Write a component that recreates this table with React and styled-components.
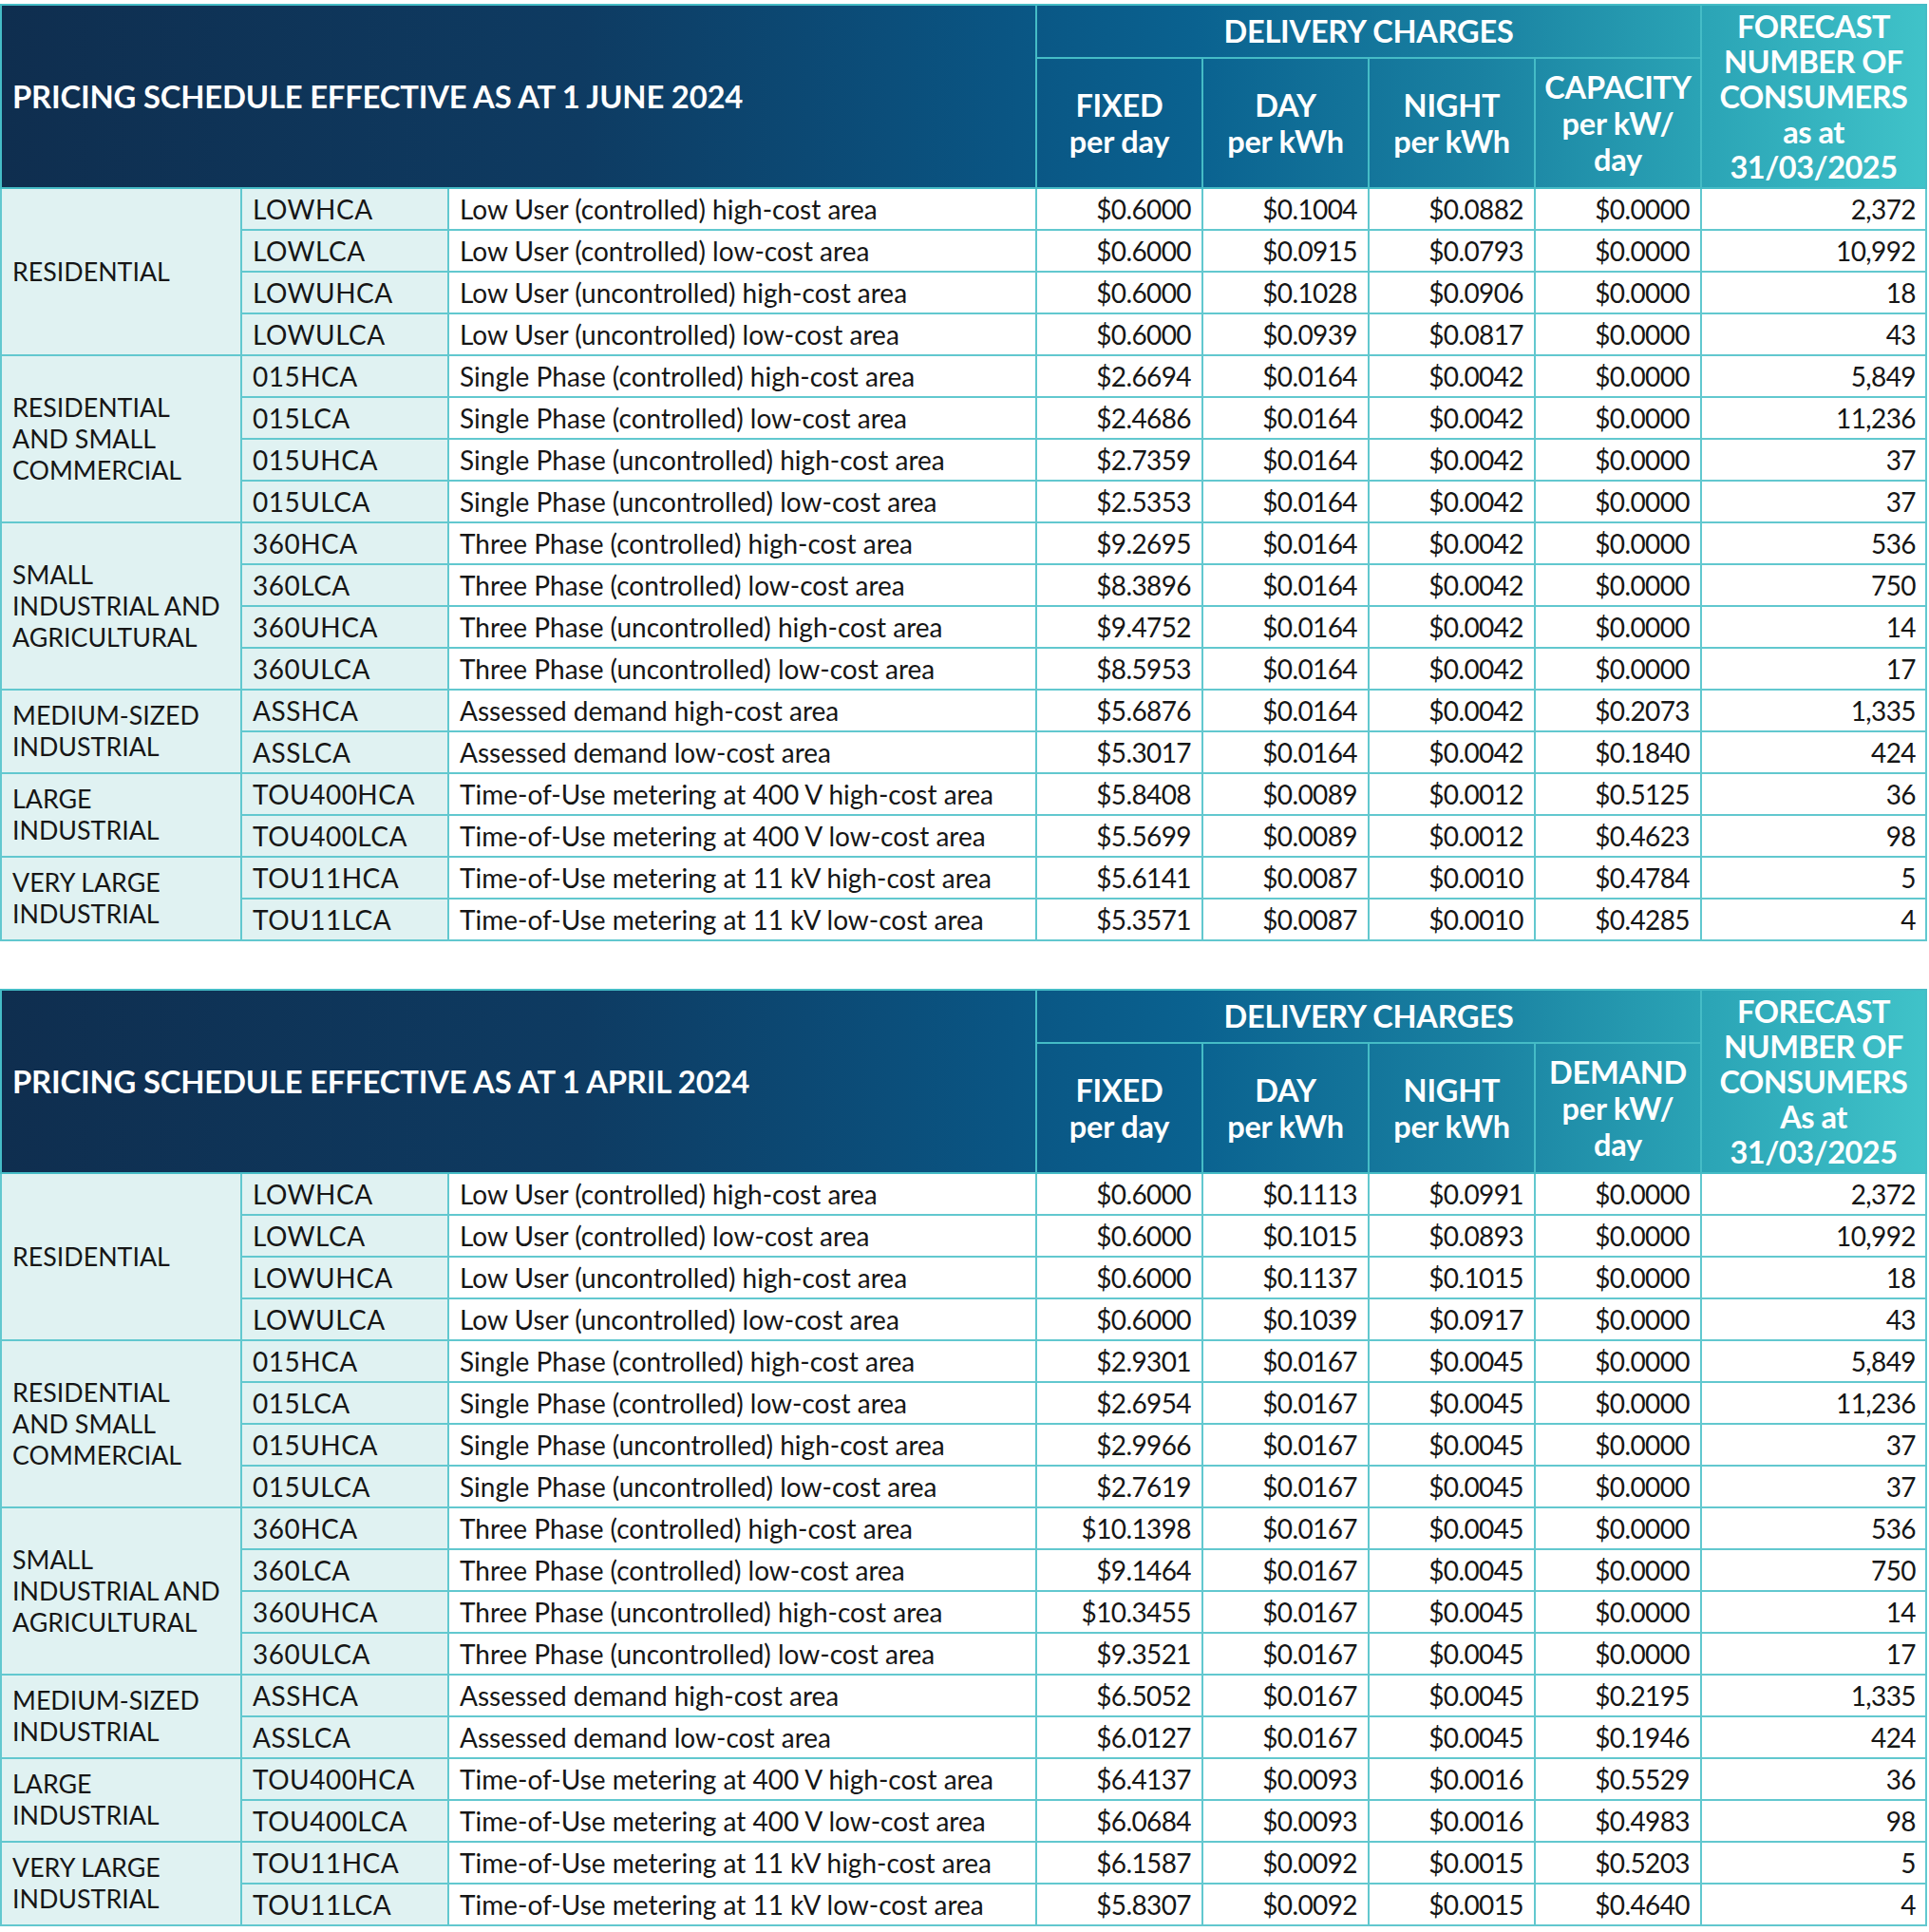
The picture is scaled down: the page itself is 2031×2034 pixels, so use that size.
import styled, { createGlobalStyle } from "styled-components";

const GlobalStyle = createGlobalStyle`
  * { box-sizing: border-box; }
  body {
    margin: 0;
    background: #fff;
    font-family: Lato, "Open Sans", sans-serif;
    color: #161616;
  }
`;

const COLS = "253px 218px 619px 175px 175px 175px 175px 237px";
const HEAD_LINE = "#45bcc6";
const BODY_LINE = "#62c8cf";
const TINT = "#e0f2f2";

const june = [
  {
    group: ["RESIDENTIAL"],
    rows: [
      ["LOWHCA", "Low User (controlled) high-cost area", "$0.6000", "$0.1004", "$0.0882", "$0.0000", "2,372"],
      ["LOWLCA", "Low User (controlled) low-cost area", "$0.6000", "$0.0915", "$0.0793", "$0.0000", "10,992"],
      ["LOWUHCA", "Low User (uncontrolled) high-cost area", "$0.6000", "$0.1028", "$0.0906", "$0.0000", "18"],
      ["LOWULCA", "Low User (uncontrolled) low-cost area", "$0.6000", "$0.0939", "$0.0817", "$0.0000", "43"],
    ],
  },
  {
    group: ["RESIDENTIAL", "AND SMALL", "COMMERCIAL"],
    rows: [
      ["015HCA", "Single Phase (controlled) high-cost area", "$2.6694", "$0.0164", "$0.0042", "$0.0000", "5,849"],
      ["015LCA", "Single Phase (controlled) low-cost area", "$2.4686", "$0.0164", "$0.0042", "$0.0000", "11,236"],
      ["015UHCA", "Single Phase (uncontrolled) high-cost area", "$2.7359", "$0.0164", "$0.0042", "$0.0000", "37"],
      ["015ULCA", "Single Phase (uncontrolled) low-cost area", "$2.5353", "$0.0164", "$0.0042", "$0.0000", "37"],
    ],
  },
  {
    group: ["SMALL", "INDUSTRIAL AND", "AGRICULTURAL"],
    rows: [
      ["360HCA", "Three Phase (controlled) high-cost area", "$9.2695", "$0.0164", "$0.0042", "$0.0000", "536"],
      ["360LCA", "Three Phase (controlled) low-cost area", "$8.3896", "$0.0164", "$0.0042", "$0.0000", "750"],
      ["360UHCA", "Three Phase (uncontrolled) high-cost area", "$9.4752", "$0.0164", "$0.0042", "$0.0000", "14"],
      ["360ULCA", "Three Phase (uncontrolled) low-cost area", "$8.5953", "$0.0164", "$0.0042", "$0.0000", "17"],
    ],
  },
  {
    group: ["MEDIUM-SIZED", "INDUSTRIAL"],
    rows: [
      ["ASSHCA", "Assessed demand high-cost area", "$5.6876", "$0.0164", "$0.0042", "$0.2073", "1,335"],
      ["ASSLCA", "Assessed demand low-cost area", "$5.3017", "$0.0164", "$0.0042", "$0.1840", "424"],
    ],
  },
  {
    group: ["LARGE", "INDUSTRIAL"],
    rows: [
      ["TOU400HCA", "Time-of-Use metering at 400 V high-cost area", "$5.8408", "$0.0089", "$0.0012", "$0.5125", "36"],
      ["TOU400LCA", "Time-of-Use metering at 400 V low-cost area", "$5.5699", "$0.0089", "$0.0012", "$0.4623", "98"],
    ],
  },
  {
    group: ["VERY LARGE", "INDUSTRIAL"],
    rows: [
      ["TOU11HCA", "Time-of-Use metering at 11 kV high-cost area", "$5.6141", "$0.0087", "$0.0010", "$0.4784", "5"],
      ["TOU11LCA", "Time-of-Use metering at 11 kV low-cost area", "$5.3571", "$0.0087", "$0.0010", "$0.4285", "4"],
    ],
  },
];

const april = [
  {
    group: ["RESIDENTIAL"],
    rows: [
      ["LOWHCA", "Low User (controlled) high-cost area", "$0.6000", "$0.1113", "$0.0991", "$0.0000", "2,372"],
      ["LOWLCA", "Low User (controlled) low-cost area", "$0.6000", "$0.1015", "$0.0893", "$0.0000", "10,992"],
      ["LOWUHCA", "Low User (uncontrolled) high-cost area", "$0.6000", "$0.1137", "$0.1015", "$0.0000", "18"],
      ["LOWULCA", "Low User (uncontrolled) low-cost area", "$0.6000", "$0.1039", "$0.0917", "$0.0000", "43"],
    ],
  },
  {
    group: ["RESIDENTIAL", "AND SMALL", "COMMERCIAL"],
    rows: [
      ["015HCA", "Single Phase (controlled) high-cost area", "$2.9301", "$0.0167", "$0.0045", "$0.0000", "5,849"],
      ["015LCA", "Single Phase (controlled) low-cost area", "$2.6954", "$0.0167", "$0.0045", "$0.0000", "11,236"],
      ["015UHCA", "Single Phase (uncontrolled) high-cost area", "$2.9966", "$0.0167", "$0.0045", "$0.0000", "37"],
      ["015ULCA", "Single Phase (uncontrolled) low-cost area", "$2.7619", "$0.0167", "$0.0045", "$0.0000", "37"],
    ],
  },
  {
    group: ["SMALL", "INDUSTRIAL AND", "AGRICULTURAL"],
    rows: [
      ["360HCA", "Three Phase (controlled) high-cost area", "$10.1398", "$0.0167", "$0.0045", "$0.0000", "536"],
      ["360LCA", "Three Phase (controlled) low-cost area", "$9.1464", "$0.0167", "$0.0045", "$0.0000", "750"],
      ["360UHCA", "Three Phase (uncontrolled) high-cost area", "$10.3455", "$0.0167", "$0.0045", "$0.0000", "14"],
      ["360ULCA", "Three Phase (uncontrolled) low-cost area", "$9.3521", "$0.0167", "$0.0045", "$0.0000", "17"],
    ],
  },
  {
    group: ["MEDIUM-SIZED", "INDUSTRIAL"],
    rows: [
      ["ASSHCA", "Assessed demand high-cost area", "$6.5052", "$0.0167", "$0.0045", "$0.2195", "1,335"],
      ["ASSLCA", "Assessed demand low-cost area", "$6.0127", "$0.0167", "$0.0045", "$0.1946", "424"],
    ],
  },
  {
    group: ["LARGE", "INDUSTRIAL"],
    rows: [
      ["TOU400HCA", "Time-of-Use metering at 400 V high-cost area", "$6.4137", "$0.0093", "$0.0016", "$0.5529", "36"],
      ["TOU400LCA", "Time-of-Use metering at 400 V low-cost area", "$6.0684", "$0.0093", "$0.0016", "$0.4983", "98"],
    ],
  },
  {
    group: ["VERY LARGE", "INDUSTRIAL"],
    rows: [
      ["TOU11HCA", "Time-of-Use metering at 11 kV high-cost area", "$6.1587", "$0.0092", "$0.0015", "$0.5203", "5"],
      ["TOU11LCA", "Time-of-Use metering at 11 kV low-cost area", "$5.8307", "$0.0092", "$0.0015", "$0.4640", "4"],
    ],
  },
];

export default function App() {
  return (
    <>
      <GlobalStyle />
      <Page>
        <Schedule
          title="PRICING SCHEDULE EFFECTIVE AS AT 1 JUNE 2024"
          fourth="CAPACITY"
          asAt="as at"
          groups={june}
        />
        <Schedule
          title="PRICING SCHEDULE EFFECTIVE AS AT 1 APRIL 2024"
          fourth="DEMAND"
          asAt="As at"
          groups={april}
        />
      </Page>
    </>
  );
}

function Schedule({ title, fourth, asAt, groups }) {
  return (
    <Sheet>
      <Head>
        <Title>{title}</Title>
        <Delivery>DELIVERY CHARGES</Delivery>
        <Forecast>
          FORECAST<br />NUMBER OF<br />CONSUMERS<br />{asAt}<br />31/03/2025
        </Forecast>
        <HeadCell>FIXED<br />per day</HeadCell>
        <HeadCell>DAY<br />per kWh</HeadCell>
        <HeadCell>NIGHT<br />per kWh</HeadCell>
        <HeadCell>{fourth}<br />per kW/<br />day</HeadCell>
      </Head>
      <Body>
        {groups.map((g) => (
          <Group key={g.rows[0][0]} group={g} />
        ))}
      </Body>
    </Sheet>
  );
}

function Group({ group }) {
  return (
    <>
      <GroupLabel $span={group.rows.length}>
        <div>
          {group.group.map((line) => (
            <div key={line}>{line}</div>
          ))}
        </div>
      </GroupLabel>
      {group.rows.map((r) => (
        <Row key={r[0]}>
          <Code>{r[0]}</Code>
          <Desc>{r[1]}</Desc>
          <Num>{r[2]}</Num>
          <Num>{r[3]}</Num>
          <Num>{r[4]}</Num>
          <Num>{r[5]}</Num>
          <Count>{r[6]}</Count>
        </Row>
      ))}
    </>
  );
}

const Page = styled.div`
  padding-top: 4px;
  display: flex;
  flex-direction: column;
  gap: 50px;
  width: 2029px;
`;

const Sheet = styled.section`
  width: 2029px;
`;

const Head = styled.div`
  display: grid;
  grid-template-columns: ${COLS};
  grid-template-rows: 58px 137px;
  background: linear-gradient(
    90deg,
    #0f2e4f 0%,
    #0e3b62 30%,
    #0a5583 52%,
    #0a6290 62%,
    #1a82a2 77%,
    #2aa3b5 88%,
    #40c3c9 100%
  );
  border-left: 2px solid ${HEAD_LINE};
  color: #fff;
  font-weight: 700;
  font-size: 32.5px;
  line-height: 38px;
`;

const HeadCell = styled.div`
  display: flex;
  align-items: center;
  justify-content: center;
  text-align: center;
  border-right: 2px solid ${HEAD_LINE};
  border-bottom: 2px solid ${HEAD_LINE};
  letter-spacing: -0.2px;
`;

const Title = styled(HeadCell)`
  grid-column: 1 / 4;
  grid-row: 1 / 3;
  justify-content: flex-start;
  padding-left: 11px;
  font-size: 32.8px;
  border-top: 2px solid ${HEAD_LINE};
`;

const Delivery = styled(HeadCell)`
  grid-column: 4 / 8;
  grid-row: 1;
  border-top: 2px solid ${HEAD_LINE};
`;

const Forecast = styled(HeadCell)`
  grid-column: 8;
  grid-row: 1 / 3;
  line-height: 37px;
  letter-spacing: -0.5px;
  border-top: 2px solid ${HEAD_LINE};
`;

const Body = styled.div`
  display: grid;
  grid-template-columns: ${COLS};
  grid-auto-rows: 44px;
  border-left: 2px solid ${BODY_LINE};
  font-size: 28px;
`;

const Row = styled.div`
  display: contents;
`;

const Cell = styled.div`
  display: flex;
  align-items: center;
  border-right: 2px solid ${BODY_LINE};
  border-bottom: 2px solid ${BODY_LINE};
  padding: 0 11px;
  white-space: nowrap;
  background: ${(p) => (p.$tint ? TINT : "#fff")};
`;

const GroupLabel = styled(Cell).attrs({ $tint: true })`
  grid-column: 1;
  grid-row: span ${(p) => p.$span};
  line-height: 33px;
  font-size: 26.8px;
`;

const Code = styled(Cell).attrs({ $tint: true })`
  grid-column: 2;
  letter-spacing: 0.5px;
`;

const Desc = styled(Cell)`
  grid-column: 3;
`;

const Num = styled(Cell)`
  justify-content: flex-end;
  font-size: 28px;
  letter-spacing: -0.6px;
`;

const Count = styled(Num)`
  padding-right: 10px;
`;
